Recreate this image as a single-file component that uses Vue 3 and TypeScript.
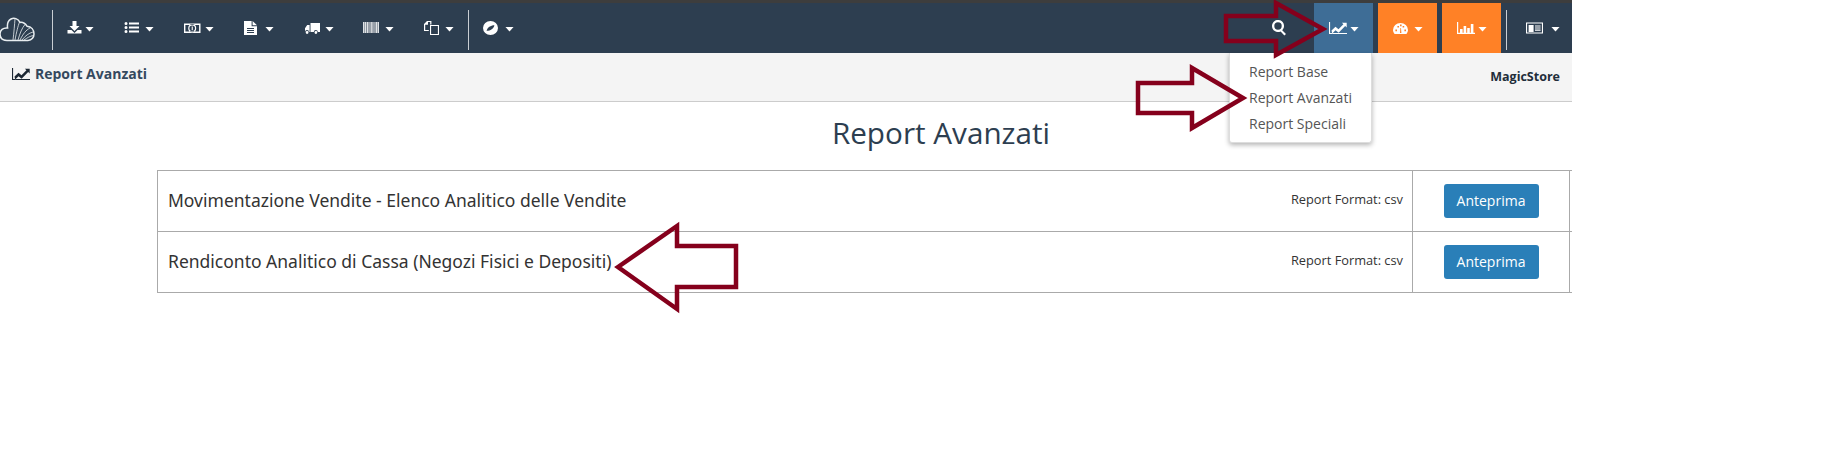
<script setup lang="ts">
type NavIcon = {
  name: string
  d: string
}

const chart = 'M1 2h1.1v10.9H19V14H1z M3.5 10.6l4-3.8 3 2.4 4.9-4.9-1.5-1.5h4.8v4.8l-1.5-1.5-6.6 6.6-3-2.4-3.4 3.2z'

const leftIcons: NavIcon[] = [
  { name: 'download', d: 'M9.5 1h4v5h3l-5 5-5-5h3z M4.5 10h4l3 3 3-3h4v3.4h-14z' },
  { name: 'list', d: 'M1.5 3.5a1.5 1.5 0 1 1 3 0a1.5 1.5 0 1 1-3 0z M1.5 7.5a1.5 1.5 0 1 1 3 0a1.5 1.5 0 1 1-3 0z M1.5 11.5a1.5 1.5 0 1 1 3 0a1.5 1.5 0 1 1-3 0z M6 2.4h10v2.2H6z M6 6.4h10v2.2H6z M6 10.4h10v2.2H6z' },
  { name: 'money', d: 'M1 3.5h16.5V13H1z M2.4 5v6.5h13.7V5z M5.2 8.25a4 4 0 1 1 8 0a4 4 0 1 1-8 0z M6.4 8.25a2.8 2.8 0 1 0 5.6 0a2.8 2.8 0 1 0-5.6 0z M8.7 6.4h1.1v3.8H8.7z' },
  { name: 'file', d: 'M1 1h7.6v5.2H14V15H1z M9.6 1l4.4 4.2H9.6z M4 8h7v1.1H4z M4 10h7v1.1H4z M4 12h7v1.1H4z' },
  { name: 'truck', d: 'M7.5 3h9.5v9h-2.2a2 2 0 0 0-4 0H7.5z M2 8.2L4.2 5h2.4v7H6a2 2 0 0 0-4 0z M2.7 12.5a1.4 1.4 0 1 1 2.8 0a1.4 1.4 0 1 1-2.8 0z M11.5 12.5a1.4 1.4 0 1 1 2.8 0a1.4 1.4 0 1 1-2.8 0z' },
  { name: 'barcode', d: 'M0 2h1.6v11H0z M2 2h1v11H2z M3.5 2h1.5v11H3.5z M5.4 2h.8v11h-.8z M6.6 2h.8v11h-.8z M7.8 2h1.1v11H7.8z M9.3 2h.7v11h-.7z M10.4 2h.8v11h-.8z M11.6 2h1v11h-1z M13 2h1.2v11H13z M14.6 2h1.4v11h-1.4z' },
  { name: 'copy', d: 'M7 5h9v10H7z M8.1 6.1v7.8h6.8V6.1z M4 1h4.4v3.6H7.2V2.1H5v2.7H2.2v5.1h3.6V11H1V4z' },
]

const compass = 'M0 8a7.5 7 0 1 1 15 0a7.5 7 0 1 1-15 0z M3.6 10.8C4.4 7.4 7.6 5.2 11.4 5.2C10.8 8.6 7.6 10.8 3.6 10.8z'
const search = 'M0 6a6 6 0 1 1 10.2 4.2L14 14l-1.6 1.6L8.6 11.4A6 6 0 0 1 0 6z M2.3 6a3.7 3.7 0 1 0 7.4 0a3.7 3.7 0 1 0-7.4 0z'
const gauge = 'M2.6 14C1.6 12.7 1 11.3 1 10a7.5 7 0 0 1 15 0c0 1.3-.6 2.7-1.6 4z M3.4 9.6h1.6v1.6H3.4z M5.4 6h1.6v1.6H5.4z M8 4.6h1.6v1.6H8z M10.6 6h1.6v1.6h-1.6z M12.4 9.6H14v1.6h-1.6z M8 13l.4-5h.6l.4 5z'
const bars = 'M1 2h1.2v10.8H19V14H1z M4 9h2.6v3.8H4z M7.6 6h2.6v6.8H7.6z M11.2 8h2.6v4.8h-2.6z M14.8 4h2.6v8.8h-2.6z'
const card = 'M1 2.5h17v11H1z M2.1 3.6v8.8h14.8V3.6z M3.6 5h5v7h-5z M10 5.4h5.6v1.1H10z M10 7.5h5.6v1.1H10z M10 9.6h5.6v1.1H10z'

const reportLinks = ['Report Base', 'Report Avanzati', 'Report Speciali']
const reports = [
  'Movimentazione Vendite - Elenco Analitico delle Vendite',
  'Rendiconto Analitico di Cassa (Negozi Fisici e Depositi)',
]
</script>

<template>
  <div class="page">
    <div class="top-strip"></div>

    <nav class="navbar">
      <a class="logo">
        <svg width="36" height="26" viewBox="0 19 36 26" fill="none" stroke="currentColor">
          <path stroke-width="1.5" d="M7 42.4H28C32 42.4 34 39 34 36C34 32 31.5 28.6 27 28.2C25 25.2 22.5 24 20 24.4C18 20.4 14 19.4 11 21C8 22.6 7 26 7.6 30C3 29.6 0 32 0 36C0 40 2 42.4 7 42.4" />
          <path stroke-width="0.8" d="M13 42C14 34 14.5 27 15 21 M15 42C16.5 34 18 28 19.5 24 M18 42C20 35 22 30 25 26.5 M20 42C23 36 26 32 30 30 M22 42C25 38 29 35 33 34 M24 42C27 40 30 38 33.5 37.5" />
        </svg>
      </a>
      <span class="divider"></span>

      <div class="menu-group">
        <a v-for="icon in leftIcons" :key="icon.name" class="nav-item">
          <svg class="icon" :class="icon.name" width="22" height="16" viewBox="0 0 22 16"><path :d="icon.d" fill-rule="evenodd" /></svg>
          <span class="caret"></span>
        </a>
      </div>
      <span class="divider second"></span>
      <a class="nav-item compass">
        <svg class="icon" width="22" height="16" viewBox="0 0 22 16"><path :d="compass" fill-rule="evenodd" /></svg>
        <span class="caret"></span>
      </a>

      <div class="nav-right">
        <svg class="search" width="15" height="16" viewBox="0 0 15 16"><path :d="search" fill-rule="evenodd" /></svg>
        <a class="nav-btn active">
          <svg class="icon" width="22" height="16" viewBox="0 0 22 16"><path :d="chart" fill-rule="evenodd" /></svg>
          <span class="caret"></span>
          <ul class="dropdown">
            <li v-for="link in reportLinks" :key="link">{{ link }}</li>
          </ul>
        </a>
        <a class="nav-btn orange">
          <svg class="icon" width="22" height="16" viewBox="0 0 22 16"><path :d="gauge" fill-rule="evenodd" /></svg>
          <span class="caret"></span>
        </a>
        <a class="nav-btn orange">
          <svg class="icon" width="22" height="16" viewBox="0 0 22 16"><path :d="bars" fill-rule="evenodd" /></svg>
          <span class="caret"></span>
        </a>
        <span class="divider"></span>
        <a class="nav-item user">
          <svg class="icon" width="22" height="16" viewBox="0 0 22 16"><path :d="card" fill-rule="evenodd" /></svg>
          <span class="caret"></span>
        </a>
      </div>
    </nav>

    <header class="subheader">
      <div class="crumb">
        <svg width="18" height="14" viewBox="1 1 18 14"><path :d="chart" fill-rule="evenodd" /></svg>
        <span>Report Avanzati</span>
      </div>
      <div class="store">MagicStore</div>
    </header>

    <main class="content">
      <h1>Report Avanzati</h1>
      <div class="report-table">
        <div v-for="report in reports" :key="report" class="report-row">
          <div class="report-name">
            <span class="name">{{ report }}</span>
            <span class="format">Report Format: csv</span>
          </div>
          <div class="report-action">
            <button class="btn" type="button">Anteprima</button>
          </div>
          <div class="report-rest"></div>
        </div>
      </div>
    </main>

    <!-- annotation arrows drawn over the screenshot -->
    <svg class="arrows" width="1572" height="472" viewBox="0 0 1572 472">
      <path d="M1226 16H1276V3L1323 29L1276 55V41H1226z" />
      <path d="M1138 83H1192V68L1243 98L1192 128V113H1138z" />
      <path d="M618 267L677 226V246H736V287H677V309z" />
    </svg>
  </div>
</template>

<style>
html,
body {
  background: #fff;
}
</style>

<style scoped>
.page {
  position: relative;
  width: 1572px;
  height: 472px;
  overflow: hidden;
  font-family: "Open Sans", "Noto Sans", sans-serif;
  color: #333;
}

.top-strip {
  height: 3px;
  background: #3d3d3d;
}

.navbar {
  display: flex;
  align-items: center;
  height: 50px;
  background: #2d3e50;
  color: #fff;
  fill: #fff;
}

.logo {
  display: flex;
  width: 52px;
  flex: none;
  color: #e8edf0;
}

.logo svg {
  margin-top: 3px;
}

.divider {
  flex: none;
  width: 1px;
  height: 40px;
  margin-top: 3px;
  background: #c9ced3;
}

.divider.second {
  margin-left: 14px;
}

.menu-group {
  display: flex;
  gap: 29px;
  margin-left: 10px;
}

.nav-item {
  display: flex;
  align-items: center;
}

.compass {
  margin-left: 14px;
}

.user {
  margin-left: 13px;
}

.user .icon {
  margin-right: 4px;
}

.icon {
  flex: none;
}

.icon.barcode {
  opacity: 0.85;
}

.caret {
  flex: none;
  width: 9px;
  height: 5px;
  margin-top: 2px;
  background: #fff;
  clip-path: polygon(0 0, 100% 0, 50% 100%);
}

.nav-right {
  position: relative;
  display: flex;
  align-items: center;
  gap: 5px;
  margin-left: auto;
  padding-right: 12px;
  height: 100%;
}

.search {
  margin-right: 22px;
}

.nav-btn {
  position: relative;
  display: flex;
  align-items: center;
  justify-content: center;
  width: 59px;
  height: 100%;
}

.nav-btn.active {
  background: #3e6d96;
}

.nav-btn.orange {
  background: #ff8126;
}

.dropdown {
  position: absolute;
  top: 100%;
  right: 1px;
  z-index: 2;
  width: 141px;
  margin: 0;
  padding: 6px 0 5px;
  list-style: none;
  background: #fff;
  border: 1px solid #ddd;
  border-top: 0;
  border-radius: 0 0 3px 3px;
  box-shadow: 0 2px 5px rgba(0, 0, 0, 0.3);
  font-size: 14px;
  line-height: 26px;
  color: #555;
}

.dropdown li {
  padding-left: 19px;
  white-space: nowrap;
}

.subheader {
  display: flex;
  justify-content: space-between;
  height: 48px;
  padding: 0 12px;
  background: #f4f4f4;
  border-bottom: 1px solid #ccc;
}

.crumb {
  display: flex;
  align-items: center;
  gap: 5px;
  height: 41px;
  font-size: 14px;
  font-weight: 700;
  color: #34495e;
  fill: #1c2733;
}

.store {
  margin-top: 15px;
  font-size: 12.5px;
  font-weight: 700;
  line-height: 18px;
  color: #222d3a;
}

.content {
  padding-top: 12px;
}

h1 {
  margin: 0 0 18px;
  font-size: 29.7px;
  font-weight: 400;
  line-height: 38px;
  text-align: center;
  padding-left: 310px;
  color: #2d3e50;
}

.report-table {
  margin-left: 157px;
  border-top: 1px solid #aaa;
}

.report-row {
  display: grid;
  grid-template-columns: 1255px 157px 1fr;
  height: 60px;
  border-bottom: 1px solid #aaa;
}

.report-name {
  display: flex;
  justify-content: space-between;
  padding: 18px 9px 0 10px;
  border-left: 1px solid #aaa;
}

.name {
  font-family: "Noto Sans", sans-serif;
  font-size: 17.5px;
  line-height: 22px;
  color: #333;
}

.format {
  font-size: 12.8px;
  line-height: 20px;
  color: #333;
}

.report-action {
  display: flex;
  justify-content: center;
  padding-top: 13px;
  border-left: 1px solid #aaa;
}

.report-rest {
  border-left: 1px solid #aaa;
}

.btn {
  width: 95px;
  height: 34px;
  padding: 0 0 2px;
  border: 0;
  border-radius: 3px;
  background: #2a7fb8;
  color: #fff;
  font-family: inherit;
  font-size: 14px;
}

.arrows {
  position: absolute;
  top: 0;
  left: 0;
  z-index: 3;
  pointer-events: none;
}

.arrows path {
  fill: none;
  stroke: #85001c;
  stroke-width: 4.5;
}
</style>
